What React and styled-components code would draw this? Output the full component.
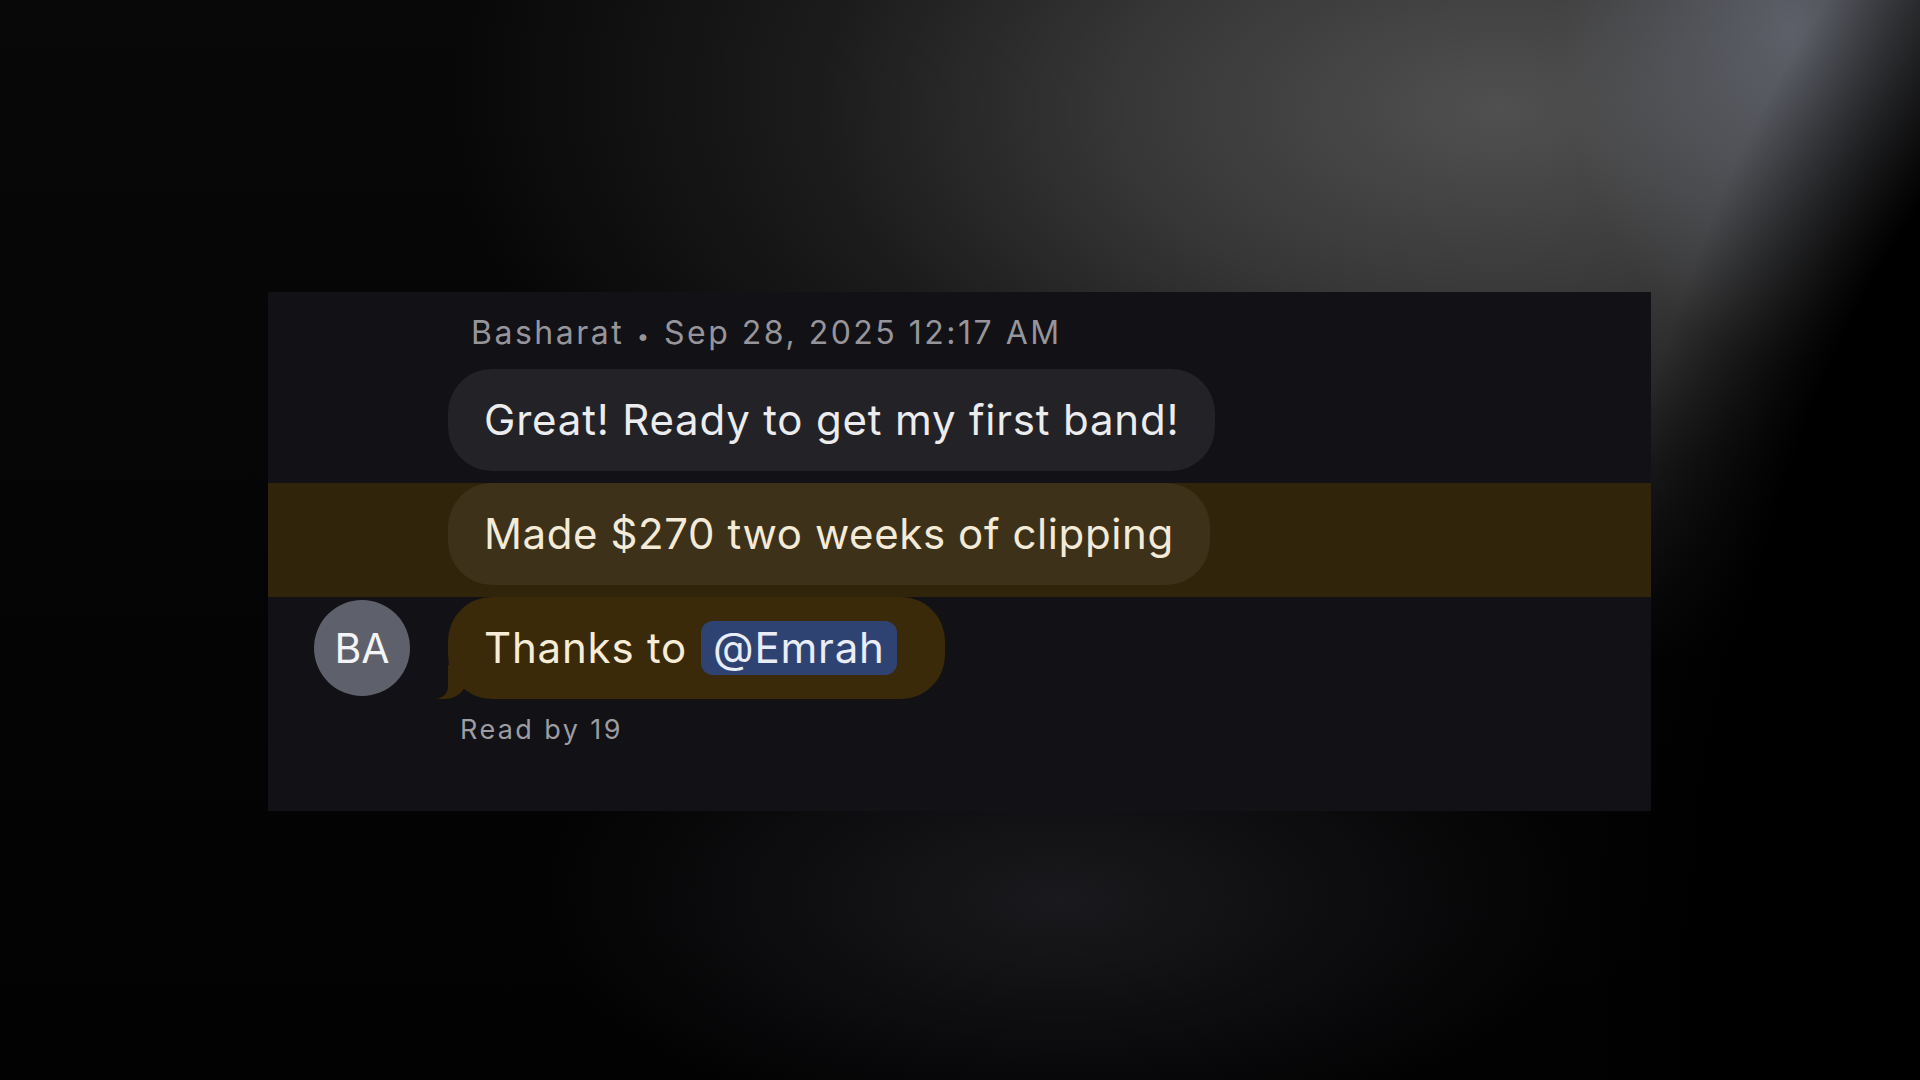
import styled, { createGlobalStyle } from "styled-components";

const GlobalStyle = createGlobalStyle`
  html,
  body {
    margin: 0;
    padding: 0;
    background: #000;
  }

  body {
    font-family: Inter, "Noto Sans", "Liberation Sans", sans-serif;
    -webkit-font-smoothing: antialiased;
  }
`;

const messages = [
  {
    id: 1,
    text: "Great! Ready to get my first band!",
    tone: "plain",
  },
  {
    id: 2,
    text: "Made $270 two weeks of clipping",
    tone: "muted",
    highlighted: true,
  },
  {
    id: 3,
    text: "Thanks to",
    mention: "@Emrah",
    tone: "gold",
    last: true,
  },
];

export default function App() {
  return (
    <>
      <GlobalStyle />

      <Stage>
        <Panel>
          <Header>
            Basharat <Dot>•</Dot> Sep 28, 2025 12:17 AM
          </Header>

          {messages.map((m) => (
            <Row key={m.id} highlighted={m.highlighted}>
              <Gutter>{m.last && <Avatar>BA</Avatar>}</Gutter>

              <Bubble tone={m.tone} tail={m.last}>
                {m.text}
                {m.mention && <Mention>{m.mention}</Mention>}
              </Bubble>
            </Row>
          ))}

          <ReadBy>Read by 19</ReadBy>
        </Panel>
      </Stage>
    </>
  );
}

const bubbleColors = {
  plain: { bg: "#232226", fg: "#ececee" },
  muted: { bg: "#3d3119", fg: "#f3ead8" },
  gold: { bg: "#3a2a09", fg: "#f6ecd8" },
};

const Stage = styled.div`
  width: 1920px;
  height: 1080px;

  box-sizing: border-box;

  padding: 292px 0 0 268px;

  overflow: hidden;

  background:
    radial-gradient(
      ellipse 640px 1250px at 2210px 1000px,
      #000 78%,
      rgba(0, 0, 0, 0) 100%
    ),
    radial-gradient(
      ellipse 230px 330px at 1790px 30px,
      rgba(104, 108, 120, 0.75),
      rgba(104, 108, 120, 0) 100%
    ),
    radial-gradient(
      ellipse 1050px 560px at 1500px 110px,
      rgba(80, 80, 80, 1) 0%,
      rgba(64, 64, 64, 0.85) 35%,
      rgba(44, 44, 44, 0.55) 65%,
      rgba(0, 0, 0, 0) 100%
    ),
    radial-gradient(
      ellipse 520px 240px at 1060px 900px,
      rgba(28, 28, 32, 0.9),
      rgba(0, 0, 0, 0) 100%
    ),
    linear-gradient(180deg, #080808 0%, #040404 60%, #020203 100%);
`;

const Panel = styled.div`
  width: 1383px;
  height: 519px;

  box-sizing: border-box;

  padding-top: 22px;

  display: flex;
  flex-direction: column;

  background: #121115;
`;

const Header = styled.div`
  padding-left: 203px;
  margin-bottom: 14px;

  font-size: 32px;
  line-height: 38px;
  font-weight: 400;
  letter-spacing: 2.5px;

  color: #96959b;
`;

const Dot = styled.span`
  margin: 0 1px;

  font-size: 22px;
`;

const Row = styled.div`
  display: flex;
  align-items: center;

  padding-bottom: 12px;

  background: ${({ highlighted }) => (highlighted ? "#30240a" : "transparent")};
`;

const Gutter = styled.div`
  width: 180px;
  flex-shrink: 0;

  display: flex;
  align-items: center;

  padding-left: 46px;
  box-sizing: border-box;
`;

const Avatar = styled.div`
  width: 96px;
  height: 96px;

  border-radius: 999px;

  display: flex;
  align-items: center;
  justify-content: center;

  background: #5e616b;

  color: #f4f4f6;

  font-size: 41px;
  font-weight: 400;
`;

const Bubble = styled.div`
  position: relative;

  height: 102px;

  box-sizing: border-box;

  display: flex;
  align-items: center;
  gap: 14px;

  padding: 0 36px;

  border-radius: 44px;

  background: ${({ tone }) => bubbleColors[tone].bg};

  color: ${({ tone }) => bubbleColors[tone].fg};

  font-size: 42px;
  line-height: 50px;
  font-weight: 400;
  letter-spacing: ${({ tone }) => (tone === "muted" ? "0.6px" : "0.8px")};

  white-space: nowrap;

  ${({ tail, tone }) =>
    tail &&
    `
    &::before {
      content: "";
      position: absolute;
      left: -12px;
      bottom: 0;
      width: 30px;
      height: 34px;
      background: ${bubbleColors[tone].bg};
      border-bottom-right-radius: 22px 18px;
    }

    &::after {
      content: "";
      position: absolute;
      left: -20px;
      bottom: 0;
      width: 20px;
      height: 36px;
      background: #121115;
      border-bottom-right-radius: 14px 12px;
    }
  `}
`;

const Mention = styled.span`
  display: inline-flex;
  align-items: center;

  height: 54px;

  margin-right: 12px;
  padding: 0 12px;

  border-radius: 12px;

  background: #2f4373;

  color: #e9edf7;
`;

const ReadBy = styled.div`
  margin-top: 3px;
  padding-left: 192px;

  font-size: 27px;
  line-height: 32px;
  letter-spacing: 2.4px;

  color: #9d9ca2;
`;
